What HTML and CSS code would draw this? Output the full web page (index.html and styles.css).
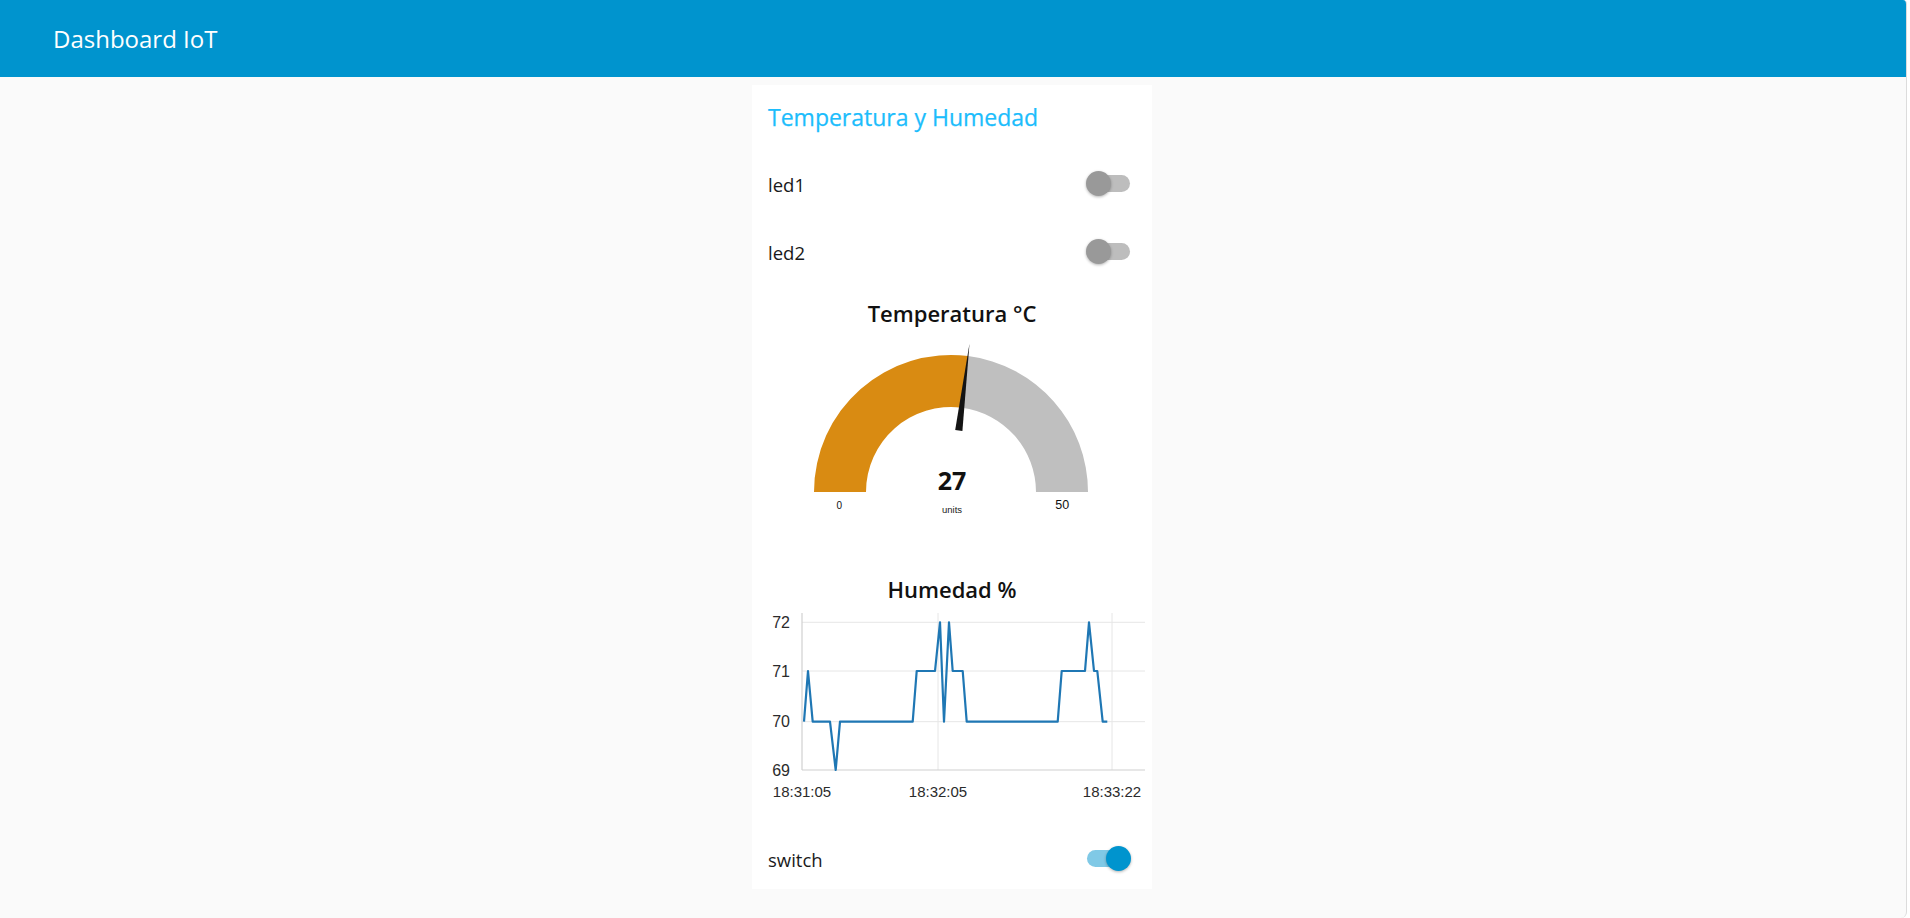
FILE: index.html
```html
<!DOCTYPE html>
<html lang="es">
<head>
<meta charset="utf-8">
<title>Dashboard IoT</title>
<link rel="stylesheet" href="styles.css">
</head>
<body>
<div class="app">
  <header class="topbar">
    <h1 class="topbar-title">Dashboard IoT</h1>
  </header>
  <main class="content">
    <section class="card">
      <h2 class="card-title">Temperatura y Humedad</h2>

      <div class="row">
        <span class="row-label">led1</span>
        <span class="toggle"><span class="toggle-track"></span><span class="toggle-thumb"></span></span>
      </div>
      <div class="row">
        <span class="row-label">led2</span>
        <span class="toggle"><span class="toggle-track"></span><span class="toggle-thumb"></span></span>
      </div>

      <div class="gauge">
        <div class="widget-title">Temperatura °C</div>
        <svg class="gauge-svg" width="400" height="200" viewBox="0 0 400 200">
          <path d="M 62 164 A 137 137 0 0 1 216.17 28.08 L 209.65 79.67 A 85 85 0 0 0 114 164 Z" fill="#d98b12"/>
          <path d="M 216.17 28.08 A 137 137 0 0 1 336 164 L 284 164 A 85 85 0 0 0 209.65 79.67 Z" fill="#bfbfbf"/>
          <polygon points="210.4,102.9 203.2,102.0 217.5,15.5" fill="#141414"/>
          <text class="g-value" x="200" y="162" text-anchor="middle">27</text>
          <text class="g-units" x="200" y="184.5" text-anchor="middle">units</text>
          <text class="g-min" x="87.3" y="181" text-anchor="middle">0</text>
          <text class="g-max" x="310.3" y="181" text-anchor="middle">50</text>
        </svg>
      </div>

      <div class="chart">
        <div class="widget-title">Humedad %</div>
        <svg class="chart-svg" width="400" height="208" viewBox="0 0 400 208">
          <g class="grid">
            <line x1="50" y1="18.3" x2="393" y2="18.3"/>
            <line x1="50" y1="67" x2="393" y2="67"/>
            <line x1="50" y1="117.7" x2="393" y2="117.7"/>
            <line x1="186" y1="9" x2="186" y2="166"/>
            <line x1="360" y1="9" x2="360" y2="166"/>
          </g>
          <g class="axis">
            <line x1="50" y1="9" x2="50" y2="166"/>
            <line x1="50" y1="166" x2="393" y2="166"/>
          </g>
          <g class="ylabels">
            <text x="38" y="24">72</text>
            <text x="38" y="72.7">71</text>
            <text x="38" y="123.4">70</text>
            <text x="38" y="171.7">69</text>
          </g>
          <g class="xlabels">
            <text x="50" y="192.7">18:31:05</text>
            <text x="186" y="192.7">18:32:05</text>
            <text x="360" y="192.7">18:33:22</text>
          </g>
          <polyline class="series" points="52,117.7 56,67 60.7,117.7 78,117.7 83.7,166 88,117.7 160.7,117.7 164.7,67 183,67 188,18.3 192,117.7 197,18.3 200.7,67 210.7,67 214.7,117.7 305.7,117.7 309.7,67 333,67 337,18.3 342,67 345.3,67 350.7,117.7 355.3,117.7"/>
        </svg>
      </div>

      <div class="row row-last">
        <span class="row-label">switch</span>
        <span class="toggle toggle-on"><span class="toggle-track"></span><span class="toggle-thumb"></span></span>
      </div>
    </section>
  </main>
</div>
</body>
</html>
```

FILE: styles.css
```css
html, body {
  margin: 0;
  padding: 0;
}
body {
  background: #ffffff;
  font-family: "Open Sans", "Noto Sans", sans-serif;
  color: #1a1a1a;
  overflow: hidden;
}
.app {
  width: 1906px;
  height: 918px;
  background: #fafafa;
  border-right: 1px solid #dcdcdc;
  border-top-right-radius: 4px;
  border-bottom-right-radius: 6px;
  overflow: hidden;
}
.topbar {
  height: 77px;
  background: #0094ce;
  display: flex;
  align-items: center;
  padding-left: 53px;
}
.topbar-title {
  margin: 0;
  font-size: 24px;
  font-weight: 400;
  color: #ffffff;
}
.content {
  display: flex;
  justify-content: center;
  padding-top: 8px;
}
.card {
  width: 400px;
  background: #ffffff;
  display: flex;
  flex-direction: column;
  margin-right: 2px;
}
.card-title {
  margin: 0;
  height: 64px;
  display: flex;
  align-items: center;
  padding-left: 16px;
  font-size: 23px;
  font-weight: 500;
  color: #1cbdfc;
  -webkit-text-stroke: 0.25px #1cbdfc;
}
.row {
  height: 68px;
  display: flex;
  align-items: center;
  justify-content: space-between;
  padding: 0 21px 0 16px;
}
.row-last {
  height: 62px;
}
.row-label {
  font-size: 18.5px;
  padding-top: 2px;
}
.toggle {
  position: relative;
  width: 45px;
  height: 25px;
}
.toggle-track {
  position: absolute;
  left: 2px;
  right: 1px;
  top: 4px;
  height: 17px;
  border-radius: 9px;
  background: #bdbdbd;
}
.toggle-thumb {
  position: absolute;
  left: 0;
  top: 0;
  width: 25px;
  height: 25px;
  border-radius: 50%;
  background: #999999;
  box-shadow: 0 1px 3px rgba(0, 0, 0, 0.3);
}
.toggle-on .toggle-track {
  left: 1px;
  right: 4px;
  background: #80c9e6;
}
.toggle-on .toggle-thumb {
  left: 20px;
  background: #0094ce;
}
.gauge {
  padding-top: 13px;
  display: flex;
  flex-direction: column;
}
.widget-title {
  height: 30px;
  line-height: 30px;
  text-align: center;
  font-size: 22px;
  font-weight: 600;
  color: #111111;
}
.gauge-svg, .chart-svg {
  display: block;
}
.g-value {
  font-family: "Open Sans", sans-serif;
  font-weight: 700;
  font-size: 25px;
  fill: #111111;
}
.g-units {
  font-family: "Liberation Sans", Arial, sans-serif;
  font-size: 9.5px;
  fill: #222222;
}
.g-min {
  font-family: "Liberation Sans", Arial, sans-serif;
  font-size: 10px;
  fill: #111111;
}
.g-max {
  font-family: "Liberation Sans", Arial, sans-serif;
  font-size: 12.5px;
  fill: #111111;
}
.chart {
  padding-top: 46px;
  padding-bottom: 15px;
  display: flex;
  flex-direction: column;
}
.grid line {
  stroke: #e6e6e6;
  stroke-width: 1;
}
.axis line {
  stroke: #d0d0d0;
  stroke-width: 1.2;
}
.ylabels text {
  font-family: "Liberation Sans", Arial, sans-serif;
  font-size: 16px;
  fill: #2b2b2b;
  text-anchor: end;
}
.xlabels text {
  font-family: "Liberation Sans", Arial, sans-serif;
  font-size: 15px;
  fill: #2b2b2b;
  text-anchor: middle;
}
.series {
  fill: none;
  stroke: #1f77b4;
  stroke-width: 2.2;
  stroke-linejoin: round;
}
```
